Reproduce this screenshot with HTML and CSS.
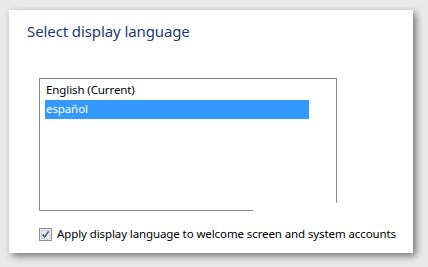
FILE: index.html
```html
<!DOCTYPE html>
<html lang="en">
<head>
	<meta charset="UTF-8">
	<title>Select display language</title>
	<link rel="stylesheet" href="styles.css">
</head>
<body>
	<div class="panel">
		<h1 class="panel-title">Select display language</h1>
		<div class="lang-list">
			<div class="lang-item">English (Current)</div>
			<div class="lang-item selected">español</div>
			<div class="lang-cut"></div>
		</div>
		<label class="apply-row">
			<span class="check-box">
				<svg width="13" height="13" viewBox="0 0 13 13">
					<defs>
						<linearGradient id="cb" x1="0" y1="0" x2="1" y2="1">
							<stop offset="0" stop-color="#dfe3ea"/>
							<stop offset="1" stop-color="#f6f7f9"/>
						</linearGradient>
					</defs>
					<rect x="0.5" y="0.5" width="12" height="12" fill="#fff" stroke="#8e8f8f"/>
					<rect x="2" y="2" width="9" height="9" fill="url(#cb)" stroke="#aeb3b9" stroke-width="0.6"/>
					<path d="M3.6 6.6 L5.6 9 L9.6 3.4" fill="none" stroke="#4a5f97" stroke-width="1.6"/>
				</svg>
			</span>
			Apply display language to welcome screen and system accounts
		</label>
	</div>
</body>
</html>
```

FILE: styles.css
```css
* {padding: 0; margin: 0;}
body {
	background: #e9e9e9;
	font-family: "Noto Sans", "Open Sans", sans-serif;
	font-size: 11.5px;
	color: #000;
	width: 428px;
	height: 267px;
	overflow: hidden;
}
.panel {
	margin: 10px 0 0 9px;
	width: 404px;
	height: 243px;
	background: #fff;
	box-shadow: 3px 3px 7px rgba(0, 0, 0, .5);
	padding: 0 0 0 18px;
	box-sizing: border-box;
}
.panel-title {
	padding-top: 11px;
	font-size: 15px;
	font-weight: normal;
	color: #1f3a78;
	line-height: 20px;
	letter-spacing: -0.1px;
}
.lang-list {
	position: relative;
	margin: 37px 0 0 12px;
	width: 298px;
	height: 133px;
	border: 1px solid #8a8a8a;
	box-sizing: border-box;
	padding: 2px 27px 0 5px;
}
.lang-item {
	height: 19px;
	line-height: 18px;
	padding-left: 1px;
	letter-spacing: -0.1px;
}
.lang-item.selected {
	background: #3399ff;
	color: #fff;
}
.lang-cut {
	position: absolute;
	left: 213px;
	top: 124px;
	width: 90px;
	height: 12px;
	background: #fff;
}
.apply-row {
	display: flex;
	align-items: center;
	gap: 5px;
	margin: 16px 0 0 12px;
	line-height: 14px;
	letter-spacing: -0.1px;
}
.check-box {
	display: block;
	width: 13px;
	height: 13px;
}
.check-box svg {
	display: block;
}
```
